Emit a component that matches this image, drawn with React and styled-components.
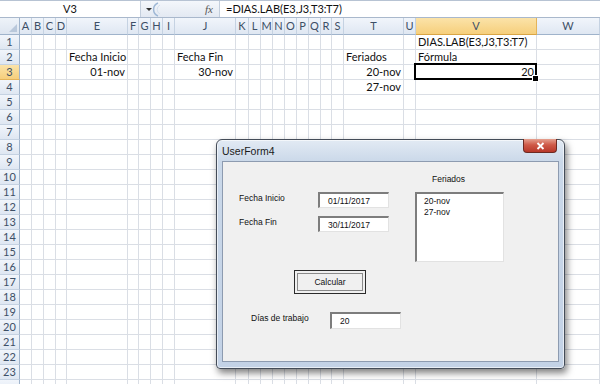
import React from 'react';
import styled, { createGlobalStyle } from 'styled-components';

const GlobalStyle = createGlobalStyle`
  html, body {
    margin: 0;
    padding: 0;
    background: #fff;
  }
  body {
    width: 600px;
    height: 384px;
    overflow: hidden;
  }
`;

const columns = [
  ['A', 12], ['B', 12], ['C', 12], ['D', 11], ['E', 61], ['F', 11], ['G', 12],
  ['H', 12], ['I', 12], ['J', 61], ['K', 13], ['L', 12], ['M', 12], ['N', 12],
  ['O', 12], ['P', 12], ['Q', 12], ['R', 11], ['S', 12], ['T', 60], ['U', 12],
  ['V', 121], ['W', 63],
];

const TEMPLATE = '20px ' + columns.map(([, w]) => `${w}px`).join(' ');

const cells = {
  V1: ['DIAS.LAB(E3,J3,T3:T7)', 'left'],
  E2: ['Fecha Inicio', 'left'],
  J2: ['Fecha Fin', 'left'],
  T2: ['Feriados', 'left'],
  V2: ['Fórmula', 'left'],
  E3: ['01-nov', 'right'],
  J3: ['30-nov', 'right'],
  T3: ['20-nov', 'right'],
  V3: ['20', 'right'],
  T4: ['27-nov', 'right'],
};

const ACTIVE_COL = 'V';
const ACTIVE_ROW = 3;
const VISIBLE_ROWS = 23;

const Page = styled.div`
  position: relative;
  width: 600px;
  height: 384px;
  overflow: hidden;
  font-family: Lato, "Liberation Sans", sans-serif;
`;

/* ---------- formula bar ---------- */

const FormulaBar = styled.div`
  display: flex;
  align-items: stretch;
  height: 18px;
  box-sizing: border-box;
  border-top: 1px solid #b7c3d3;
  border-bottom: 1px solid #a9b8cc;
  background: linear-gradient(#f4f7fb, #e3e9f2);
`;

const NameBox = styled.div`
  width: 140px;
  background: #fff;
  border-right: 1px solid #c3cedc;
  font-size: 11px;
  line-height: 16px;
  text-align: center;
  color: #111;
`;

const BarTools = styled.div`
  width: 78px;
  display: flex;
  align-items: center;
  border-right: 1px solid #c3cedc;
`;

const Fx = styled.span`
  margin-left: auto;
  margin-right: 6px;
  font-family: "Liberation Serif", serif;
  font-style: italic;
  font-size: 11px;
  color: #555;
`;

const FormulaInput = styled.div`
  flex: 1;
  background: #fff;
  padding-left: 6px;
  font-size: 11px;
  line-height: 16px;
  color: #111;
`;

/* ---------- sheet grid ---------- */

const Sheet = styled.div`
  display: flex;
  flex-direction: column;
`;

const GridRow = styled.div`
  display: grid;
  grid-template-columns: ${TEMPLATE};
  height: ${(p) => p.$h}px;
`;

const headerBg = (active) =>
  active
    ? 'linear-gradient(#fbe3a9, #f6cf7c)'
    : 'linear-gradient(#f1f5fb, #dfe7f2)';

const Corner = styled.div`
  position: relative;
  box-sizing: border-box;
  background: linear-gradient(#eef3f9, #dde5f0);
  border-right: 1px solid #9fb3cb;
  border-bottom: 1px solid #9fb3cb;

  &::after {
    content: '';
    position: absolute;
    right: 2px;
    bottom: 2px;
    border-left: 8px solid transparent;
    border-bottom: 8px solid #b9c8db;
  }
`;

const ColHeader = styled.div`
  box-sizing: border-box;
  background: ${(p) => headerBg(p.$active)};
  border-right: 1px solid ${(p) => (p.$active ? '#e4b45a' : '#c5d2e2')};
  border-bottom: 1px solid ${(p) => (p.$active ? '#d9a545' : '#9fb3cb')};
  font-size: 11px;
  line-height: 16px;
  text-align: center;
  color: #3d4f66;
  overflow: hidden;
`;

const RowHeader = styled.div`
  box-sizing: border-box;
  background: ${(p) => headerBg(p.$active)};
  border-right: 1px solid #9fb3cb;
  border-bottom: 1px solid ${(p) => (p.$active ? '#e4b45a' : '#c5d2e2')};
  font-size: 11px;
  line-height: 14px;
  text-align: center;
  color: #3d4f66;
`;

const Cell = styled.div`
  position: relative;
  box-sizing: border-box;
  border-right: 1px solid #dadee5;
  border-bottom: 1px solid #dadee5;
  font-size: 11px;
  line-height: 14px;
  color: #111;
  white-space: nowrap;
  text-align: ${(p) => p.$align};
  padding: 0 2px;

  ${(p) =>
    p.$selected &&
    `
    &::after {
      content: '';
      position: absolute;
      left: -2px;
      top: -2px;
      right: -1px;
      bottom: -1px;
      border: 2px solid #000;
    }
  `}
`;

const FillHandle = styled.span`
  position: absolute;
  right: -3px;
  bottom: -3px;
  width: 5px;
  height: 5px;
  background: #000;
  border: 1px solid #fff;
  z-index: 2;
`;

/* ---------- user form ---------- */

const Window = styled.div`
  position: absolute;
  left: 216px;
  top: 139px;
  width: 349px;
  height: 230px;
  box-sizing: border-box;
  display: flex;
  flex-direction: column;
  padding: 0 5px 6px;
  border: 1px solid #444c58;
  border-radius: 6px 6px 4px 4px;
  background: linear-gradient(#e2eaf4, #cad8e9 22px, #c3d2e6);
  box-shadow: 2px 4px 7px rgba(0, 0, 0, 0.5), inset 0 0 0 1px rgba(255, 255, 255, 0.6);
`;

const TitleBar = styled.div`
  height: 21px;
  display: flex;
  align-items: center;
  font-family: "Liberation Sans", sans-serif;
  font-size: 10.5px;
  color: #1a1a1a;
`;

const CloseButton = styled.div`
  position: absolute;
  top: -1px;
  right: 7px;
  width: 34px;
  height: 14px;
  box-sizing: border-box;
  border: 1px solid #6d2a22;
  border-top: none;
  border-radius: 0 0 4px 4px;
  background: linear-gradient(#e5a08f, #cf5a48 45%, #b8382a);
  display: flex;
  align-items: center;
  justify-content: center;
`;

const Client = styled.div`
  flex: 1;
  display: flex;
  background: #f0f0f0;
  border: 1px solid #8d9bb0;
  font-family: "Liberation Sans", sans-serif;
  font-size: 8.5px;
  color: #111;
`;

const LeftPane = styled.div`
  width: 192px;
  display: flex;
  flex-direction: column;
  padding-top: 30px;
`;

const FieldRow = styled.div`
  display: flex;
  align-items: flex-start;
  margin-top: ${(p) => p.$mt || 0}px;
`;

const FieldLabel = styled.div`
  width: ${(p) => p.$w}px;
  padding-left: ${(p) => p.$indent}px;
  box-sizing: border-box;
  padding-top: 1px;
`;

const TextBox = styled.div`
  width: 71px;
  height: ${(p) => p.$h || 16}px;
  box-sizing: border-box;
  background: #fff;
  border-top: 2px solid #7d7d7d;
  border-left: 2px solid #7d7d7d;
  border-right: 1px solid #e2e2e2;
  border-bottom: 1px solid #e2e2e2;
  padding-left: 8px;
  display: flex;
  align-items: center;
`;

const Button = styled.div`
  width: 72px;
  height: 24px;
  margin-left: 71px;
  margin-top: 38px;
  box-sizing: border-box;
  border: 1px solid #2b2b2b;
  background: #f0f0f0;
  box-shadow: inset 0 0 0 2px #f0f0f0, inset 0 0 0 3px #8a8a8a;
  display: flex;
  align-items: center;
  justify-content: center;
`;

const RightPane = styled.div`
  width: 89px;
  display: flex;
  flex-direction: column;
`;

const ListCaption = styled.div`
  height: 30px;
  box-sizing: border-box;
  padding: 12px 0 0 17px;
`;

const ListBox = styled.div`
  height: 70px;
  box-sizing: border-box;
  background: #fff;
  border-top: 2px solid #7d7d7d;
  border-left: 2px solid #7d7d7d;
  border-right: 1px solid #e2e2e2;
  border-bottom: 1px solid #e2e2e2;
  padding: 2px 0 0 7px;
  line-height: 10.5px;
`;

function ColumnHeaders() {
  return (
    <GridRow $h={17}>
      <Corner />
      {columns.map(([name]) => (
        <ColHeader key={name} $active={name === ACTIVE_COL}>
          {name}
        </ColHeader>
      ))}
    </GridRow>
  );
}

// n is the row number; a row past the visible ones is drawn without its label
function SheetRow({ n }) {
  return (
    <GridRow $h={15}>
      <RowHeader $active={n === ACTIVE_ROW}>{n <= VISIBLE_ROWS ? n : ''}</RowHeader>
      {columns.map(([name]) => {
        const ref = `${name}${n}`;
        const data = cells[ref];
        const selected = name === ACTIVE_COL && n === ACTIVE_ROW;
        return (
          <Cell key={ref} $align={data ? data[1] : 'left'} $selected={selected}>
            {data ? data[0] : ''}
            {selected && <FillHandle />}
          </Cell>
        );
      })}
    </GridRow>
  );
}

function UserForm() {
  return (
    <Window>
      <TitleBar>UserForm4</TitleBar>
      <CloseButton>
        <svg width="9" height="8" viewBox="0 0 9 8">
          <path d="M1.5 1 L7.5 7 M7.5 1 L1.5 7" stroke="#fff" strokeWidth="1.8" />
        </svg>
      </CloseButton>
      <Client>
        <LeftPane>
          <FieldRow>
            <FieldLabel $w={95} $indent={16}>Fecha Inicio</FieldLabel>
            <TextBox>01/11/2017</TextBox>
          </FieldRow>
          <FieldRow $mt={8}>
            <FieldLabel $w={95} $indent={16}>Fecha Fin</FieldLabel>
            <TextBox>30/11/2017</TextBox>
          </FieldRow>
          <Button>Calcular</Button>
          <FieldRow $mt={18}>
            <FieldLabel $w={107} $indent={28}>Días de trabajo</FieldLabel>
            <TextBox $h={17}>20</TextBox>
          </FieldRow>
        </LeftPane>
        <RightPane>
          <ListCaption>Feriados</ListCaption>
          <ListBox>
            <div>20-nov</div>
            <div>27-nov</div>
          </ListBox>
        </RightPane>
      </Client>
    </Window>
  );
}

export default function App() {
  const rows = Array.from({ length: VISIBLE_ROWS + 1 }, (_, i) => i + 1);
  return (
    <Page>
      <GlobalStyle />
      <FormulaBar>
        <NameBox>V3</NameBox>
        <BarTools>
          <svg width="32" height="16" viewBox="0 0 32 16">
            <path d="M5 7 L11 7 L8 10 Z" fill="#333" />
            <path d="M17 2 A7 7 0 0 0 17 15" fill="none" stroke="#9fb8d6" strokeWidth="1.5" />
            <path d="M19 4 A5 5 0 0 0 19 13" fill="none" stroke="#d4e0ee" strokeWidth="1" />
          </svg>
          <Fx>fx</Fx>
        </BarTools>
        <FormulaInput>=DIAS.LAB(E3,J3,T3:T7)</FormulaInput>
      </FormulaBar>
      <Sheet>
        <ColumnHeaders />
        {rows.map((n) => (
          <SheetRow key={n} n={n} />
        ))}
      </Sheet>
      <UserForm />
    </Page>
  );
}
